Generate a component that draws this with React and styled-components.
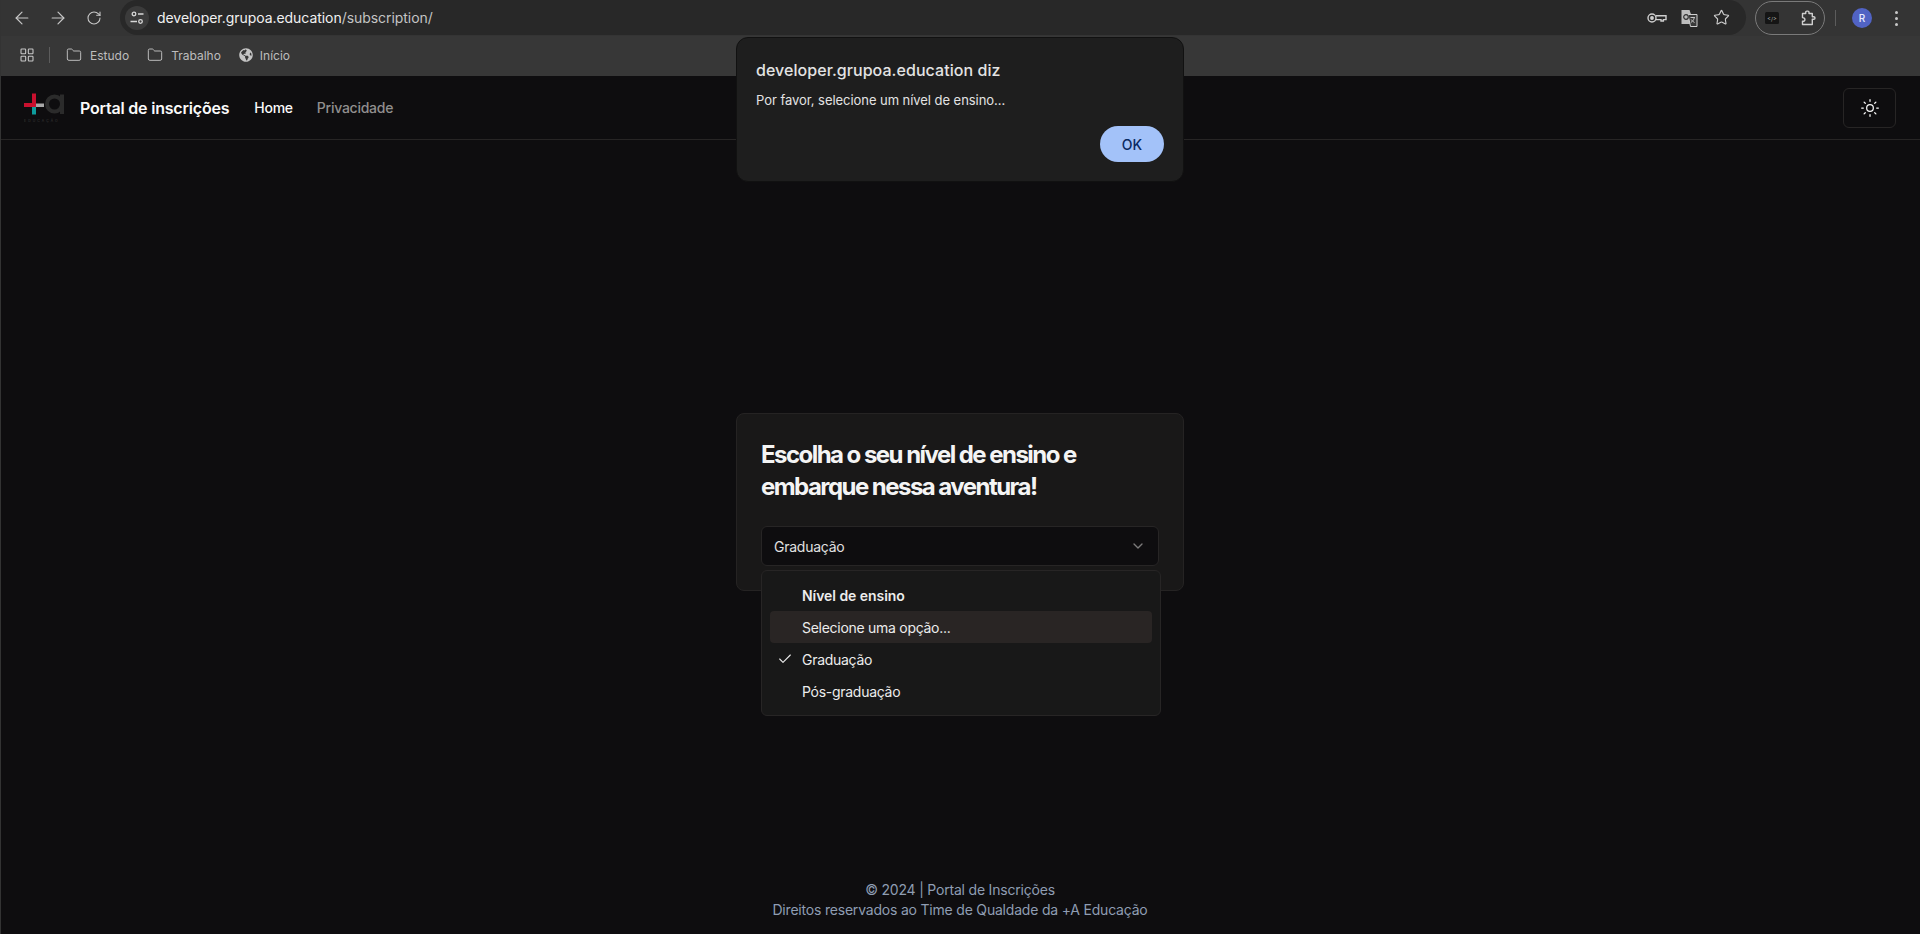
import React from "react";
import styled, { createGlobalStyle } from "styled-components";
import {
  ArrowLeft,
  ArrowRight,
  RotateCw,
  Star,
  LayoutGrid,
  Folder,
  Sun,
  Check,
  ChevronDown,
} from "lucide-react";
import { FaGlobeAmericas } from "react-icons/fa";

const GlobalStyle = createGlobalStyle`
  html, body {
    margin: 0;
    padding: 0;
    background: #0e0d0f;
    overflow: hidden;
  }
  * {
    box-sizing: border-box;
  }
`;

const Page = styled.div`
  position: relative;
  width: 1920px;
  height: 934px;
  display: flex;
  flex-direction: column;
  font-family: Inter, "Liberation Sans", sans-serif;
  background: #0e0d0f;
  color: #fafafa;
  &::after {
    content: "";
    position: absolute;
    top: 0;
    bottom: 0;
    left: 0;
    width: 1px;
    background: #333;
  }
`;

const BrowserBar = styled.div`
  height: 36px;
  display: flex;
  align-items: center;
  padding-left: 4px;
  background: #343434;
`;

const NavButton = styled.div`
  width: 36px;
  height: 36px;
  display: flex;
  align-items: center;
  justify-content: center;
  color: #c8c8c8;
`;

const AddressPill = styled.div`
  width: 1626px;
  height: 35px;
  margin-left: 8px;
  margin-top: -1px;
  display: flex;
  align-items: center;
  padding: 0 9px 0 5px;
  background: #282828;
  border-radius: 18px;
`;

const SiteInfo = styled.div`
  width: 24px;
  height: 24px;
  border-radius: 50%;
  background: #3b3b3b;
  display: flex;
  align-items: center;
  justify-content: center;
`;

const Url = styled.div`
  margin-left: 8px;
  font-size: 14px;
  color: #f1f1f1;
  letter-spacing: -0.05px;
  flex: 1;
  span {
    color: #c4c4c4;
  }
`;

const PillIcon = styled.div`
  width: 32px;
  height: 32px;
  display: flex;
  align-items: center;
  justify-content: center;
  color: #cfcfcf;
`;

const ExtensionGroup = styled.div`
  width: 70px;
  height: 34px;
  margin-left: 9px;
  border: 1px solid #7a7a7a;
  border-radius: 17px;
  display: flex;
  align-items: center;
  justify-content: space-between;
  padding: 0 7px 0 9px;
  color: #cfcfcf;
`;

const VerticalRule = styled.div`
  width: 1px;
  height: ${(p) => p.$height}px;
  background: #5c5c5c;
  margin: ${(p) => p.$margin};
`;

const Avatar = styled.div`
  width: 20px;
  height: 20px;
  border-radius: 50%;
  background: #5163c4;
  color: #e8ebff;
  font-size: 10px;
  font-weight: 500;
  display: flex;
  align-items: center;
  justify-content: center;
`;

const MenuDots = styled.div`
  margin-left: 23px;
  display: flex;
  flex-direction: column;
  gap: 3px;
  i {
    width: 3px;
    height: 3px;
    border-radius: 50%;
    background: #c8c8c8;
  }
`;

const BookmarksBar = styled.div`
  height: 40px;
  padding: 0 0 2px 19px;
  display: flex;
  align-items: center;
  background: #373737;
`;

const Bookmark = styled.div`
  display: flex;
  align-items: center;
  gap: ${(p) => p.$gap || 8}px;
  margin-right: 18px;
  font-size: 12px;
  color: #bdbdbd;
  svg {
    color: #c4c4c4;
  }
`;

const Header = styled.header`
  height: 64px;
  display: flex;
  align-items: center;
  padding: 0 24px;
  border-bottom: 1px solid #272525;
`;

const Logo = styled.svg`
  width: 42px;
  height: 38px;
  margin-right: 14px;
`;

const Brand = styled.div`
  font-size: 16px;
  font-weight: 600;
  letter-spacing: -0.2px;
  margin-right: 25px;
`;

const NavLink = styled.a`
  font-size: 14px;
  font-weight: 500;
  letter-spacing: -0.25px;
  margin-right: 24px;
  color: ${(p) => (p.$active ? "#fafafa" : "#918f8e")};
`;

const ThemeButton = styled.button`
  margin-left: auto;
  width: 53px;
  height: 40px;
  background: transparent;
  border: 1px solid #272525;
  border-radius: 6px;
  color: #fafafa;
  display: flex;
  align-items: center;
  justify-content: center;
  padding: 0;
`;

const Main = styled.main`
  flex: 1;
  display: flex;
  align-items: center;
  justify-content: center;
`;

const Card = styled.section`
  width: 448px;
  padding: 24px;
  background: #191818;
  border: 1px solid #252323;
  border-radius: 8px;
`;

const Title = styled.h1`
  margin: 0 0 23px;
  padding-top: 1px;
  font-size: 24px;
  line-height: 32px;
  font-weight: 650;
  letter-spacing: -1.54px;
  color: #f4f4f4;
`;

const SelectWrap = styled.div`
  position: relative;
`;

const SelectTrigger = styled.div`
  height: 40px;
  padding: 0 12px;
  display: flex;
  align-items: center;
  justify-content: space-between;
  background: #0e0d0f;
  border: 1px solid #272525;
  border-radius: 6px;
  font-size: 14px;
  letter-spacing: -0.25px;
  color: #e0e0e0;
`;

const Dropdown = styled.div`
  position: absolute;
  top: 44px;
  left: 0;
  width: 400px;
  padding: 8px;
  background: #181818;
  border: 1px solid #272525;
  border-radius: 6px;
`;

const Option = styled.div`
  position: relative;
  height: 32px;
  padding-left: 32px;
  display: flex;
  align-items: center;
  font-size: 14px;
  font-weight: ${(p) => (p.$label ? 600 : 400)};
  letter-spacing: ${(p) => (p.$label ? "-0.05px" : "-0.28px")};
  color: #ececec;
  border-radius: 4px;
  background: ${(p) => (p.$focused ? "#292524" : "transparent")};
`;

const OptionCheck = styled.span`
  position: absolute;
  left: 7px;
  top: 8px;
  display: flex;
`;

const Footer = styled.footer`
  height: 70px;
  padding-top: 16px;
  text-align: center;
  font-size: 14px;
  line-height: 20px;
  letter-spacing: -0.2px;
  color: #8f9db3;
`;

const Alert = styled.div`
  position: absolute;
  top: 37px;
  left: 736px;
  width: 448px;
  height: 145px;
  padding: 21px 19px 0 19px;
  background: #1e1e1e;
  border: 1px solid #111;
  border-radius: 12px;
  display: flex;
  flex-direction: column;
`;

const AlertTitle = styled.div`
  font-size: 16px;
  font-weight: 500;
  line-height: 22px;
  letter-spacing: 0.05px;
  color: #e3e3e3;
`;

const AlertText = styled.div`
  margin-top: 10px;
  font-size: 13px;
  line-height: 18px;
  letter-spacing: -0.05px;
  color: #e3e3e3;
`;

const AlertButton = styled.button`
  align-self: flex-end;
  margin-top: 17px;
  width: 64px;
  height: 36px;
  border: none;
  border-radius: 18px;
  background: #a3c2f9;
  color: #0a2a62;
  font-family: inherit;
  font-size: 14px;
  font-weight: 500;
`;

const Options = ["Selecione uma opção...", "Graduação", "Pós-graduação"];

const TuneIcon = () => (
  <svg width="16" height="16" viewBox="0 0 16 16" fill="none" stroke="#d8d8d8" strokeWidth="1.3">
    <circle cx="5" cy="4" r="1.8" />
    <path d="M9 4h5.5M1.5 11.5H8" />
    <circle cx="11.5" cy="11.5" r="1.8" />
  </svg>
);

const KeyIcon = () => (
  <svg width="20" height="12" viewBox="0 0 20 12" fill="none" stroke="#cfcfcf" strokeWidth="1.4">
    <circle cx="5" cy="6" r="4" />
    <circle cx="5" cy="6" r="1.2" fill="#cfcfcf" />
    <path d="M9 3.8h10v3.8h-2.6v1.4h-2.4V7.6H9" />
  </svg>
);

const TranslateIcon = () => (
  <svg width="18" height="18" viewBox="0 0 18 18" fill="none">
    <path d="M1.5 1h8l5 14h-13z" fill="#bdbdbd" />
    <path d="M8 5.5h9v12h-6.5z" fill="#3a3a3a" stroke="#cfcfcf" strokeWidth="1" />
    <circle cx="6" cy="8" r="2.3" stroke="#333" strokeWidth="1.2" />
    <path d="M10.5 8.5h4.5M12.7 8v1M14.2 9c-.5 2-1.8 3.6-3.4 4.6M11.2 10.5c.8 1.3 1.9 2.4 3.3 3" stroke="#cfcfcf" strokeWidth=".9" />
  </svg>
);

const ExtensionIcon = () => (
  <svg width="14" height="12" viewBox="0 0 14 12">
    <rect width="14" height="12" rx="1.5" fill="#151515" />
    <text x="7" y="8.6" textAnchor="middle" fontSize="5.5" fontFamily="Inter, sans-serif" fill="#b0b0b0">
      {"</>"}
    </text>
  </svg>
);

// chrome's puzzle piece, tab on top and on the right side
const PuzzleIcon = () => (
  <svg width="16" height="16" viewBox="0 0 16 16" fill="none" stroke="#cfcfcf" strokeWidth="1.4" strokeLinejoin="round">
    <path d="M1.5 3.5h3.2V2.2a1.1 1.1 0 0 1 1.1-1.1h1.1a1.1 1.1 0 0 1 1.1 1.1v1.3h3.3v3.2h1.4a1.3 1.3 0 0 1 0 2.6h-1.4v5.2H1.5v-3.2c1.8 0 2.4-1 2.4-1.9S3.3 7.6 1.5 7.6z" />
  </svg>
);

const LogoMark = () => (
  <Logo viewBox="0 0 42 38">
    <circle cx="30.5" cy="15" r="7.5" fill="none" stroke="#2b2b2b" strokeWidth="4" />
    <rect x="36" y="5.5" width="4" height="19.5" fill="#2b2b2b" />
    <rect x="12" y="14.5" width="8" height="3.5" fill="#a8a8a8" />
    <rect x="0" y="14" width="12" height="4" fill="#c8102e" />
    <rect x="8" y="4.5" width="4" height="13" fill="#c8102e" />
    <rect x="8" y="18" width="4" height="7.5" fill="#0e9c9c" />
    <text x="0" y="33" fontSize="3.4" letterSpacing="2.1" fontFamily="Inter, sans-serif" fill="#3a3a3a">
      EDUCAÇÃO
    </text>
  </Logo>
);

export default function App() {
  return (
    <Page>
      <GlobalStyle />
      <BrowserBar>
        <NavButton>
          <ArrowLeft size={20} strokeWidth={1.4} />
        </NavButton>
        <NavButton>
          <ArrowRight size={20} strokeWidth={1.4} />
        </NavButton>
        <NavButton>
          <RotateCw size={16} strokeWidth={1.6} />
        </NavButton>
        <AddressPill>
          <SiteInfo>
            <TuneIcon />
          </SiteInfo>
          <Url>
            developer.grupoa.education<span>/subscription/</span>
          </Url>
          <PillIcon>
            <KeyIcon />
          </PillIcon>
          <PillIcon>
            <TranslateIcon />
          </PillIcon>
          <PillIcon>
            <Star size={17} strokeWidth={1.6} />
          </PillIcon>
        </AddressPill>
        <ExtensionGroup>
          <ExtensionIcon />
          <PuzzleIcon />
        </ExtensionGroup>
        <VerticalRule $height={16} $margin="0 16px 0 10px" />
        <Avatar>R</Avatar>
        <MenuDots>
          <i />
          <i />
          <i />
        </MenuDots>
      </BrowserBar>
      <BookmarksBar>
        <LayoutGrid size={16} color="#c8c8c8" strokeWidth={1.6} />
        <VerticalRule $height={16} $margin="0 16px 0 14px" />
        <Bookmark>
          <Folder size={16} strokeWidth={1.4} />
          Estudo
        </Bookmark>
        <Bookmark>
          <Folder size={16} strokeWidth={1.4} />
          Trabalho
        </Bookmark>
        <Bookmark $gap={7}>
          <FaGlobeAmericas size={14} />
          Início
        </Bookmark>
      </BookmarksBar>
      <Header>
        <LogoMark />
        <Brand>Portal de inscrições</Brand>
        <NavLink $active>Home</NavLink>
        <NavLink>Privacidade</NavLink>
        <ThemeButton>
          <Sun size={20} strokeWidth={1.5} />
        </ThemeButton>
      </Header>
      <Main>
        <Card>
          <Title>Escolha o seu nível de ensino e embarque nessa aventura!</Title>
          <SelectWrap>
            <SelectTrigger>
              Graduação
              <ChevronDown size={16} color="#7c7b7b" />
            </SelectTrigger>
            <Dropdown>
              <Option $label>Nível de ensino</Option>
              {Options.map((item, i) => (
                <Option key={item} $focused={i === 0}>
                  {item === "Graduação" && (
                    <OptionCheck>
                      <Check size={16} strokeWidth={1.6} />
                    </OptionCheck>
                  )}
                  {item}
                </Option>
              ))}
            </Dropdown>
          </SelectWrap>
        </Card>
      </Main>
      <Footer>
        © 2024 | Portal de Inscrições
        <br />
        Direitos reservados ao Time de Qualdade da +A Educação
      </Footer>
      <Alert>
        <AlertTitle>developer.grupoa.education diz</AlertTitle>
        <AlertText>Por favor, selecione um nível de ensino...</AlertText>
        <AlertButton>OK</AlertButton>
      </Alert>
    </Page>
  );
}
